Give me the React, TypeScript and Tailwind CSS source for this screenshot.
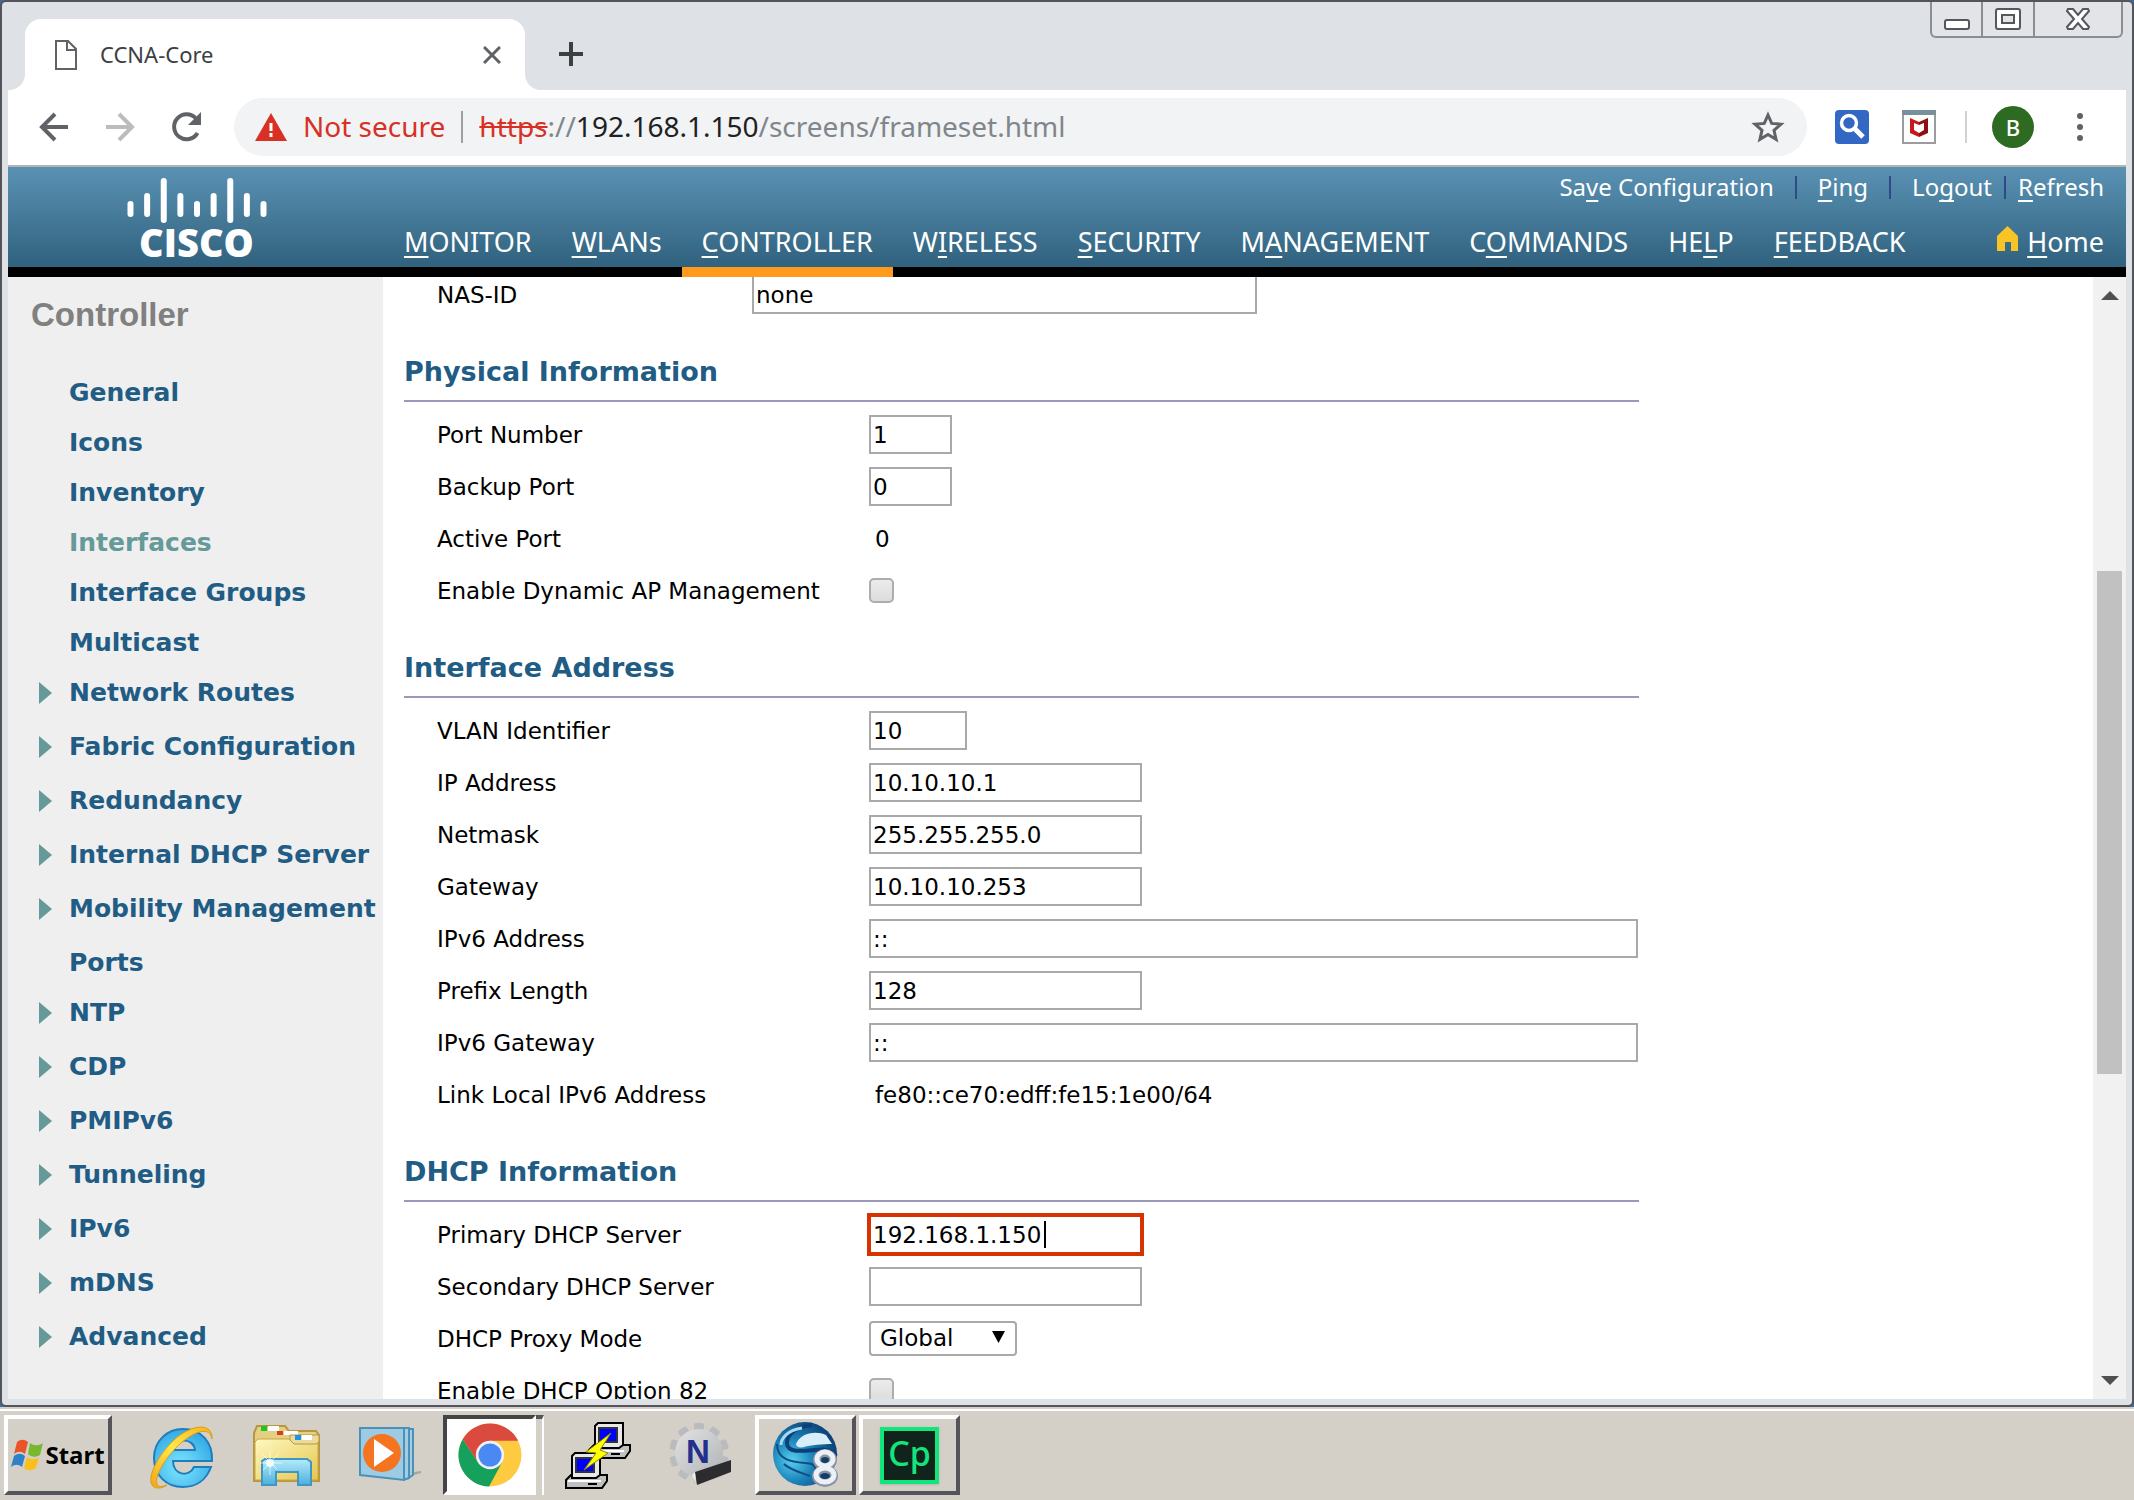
import React from "react";

type MenuEntry = { label: string; expandable?: boolean; current?: boolean };

const SIDE_MENU: MenuEntry[] = [
  { label: "General" },
  { label: "Icons" },
  { label: "Inventory" },
  { label: "Interfaces", current: true },
  { label: "Interface Groups" },
  { label: "Multicast" },
  { label: "Network Routes", expandable: true },
  { label: "Fabric Configuration", expandable: true },
  { label: "Redundancy", expandable: true },
  { label: "Internal DHCP Server", expandable: true },
  { label: "Mobility Management", expandable: true },
  { label: "Ports" },
  { label: "NTP", expandable: true },
  { label: "CDP", expandable: true },
  { label: "PMIPv6", expandable: true },
  { label: "Tunneling", expandable: true },
  { label: "IPv6", expandable: true },
  { label: "mDNS", expandable: true },
  { label: "Advanced", expandable: true },
];

/* [before, access key, after] */
const TOP_NAV: [string, string, string][] = [
  ["", "M", "ONITOR"],
  ["", "W", "LANs"],
  ["", "C", "ONTROLLER"],
  ["W", "I", "RELESS"],
  ["", "S", "ECURITY"],
  ["M", "A", "NAGEMENT"],
  ["C", "O", "MMANDS"],
  ["HE", "L", "P"],
  ["", "F", "EEDBACK"],
];

function Mnemonic({ parts }: { parts: [string, string, string] }) {
  return (
    <>
      {parts[0]}
      <span className="underline decoration-2 underline-offset-4 [text-decoration-skip-ink:none]">{parts[1]}</span>
      {parts[2]}
    </>
  );
}

/* ---------- browser chrome ---------- */

function WindowButtons() {
  return (
    <div className="absolute right-[3px] top-0 flex h-9 rounded-b-md border-2 border-t-0 border-[#8b8d91] bg-[#e2e4e8]">
      <button aria-label="Minimize" className="flex w-[51px] items-center justify-center border-r-2 border-[#8b8d91]">
        <svg width="26" height="24" viewBox="0 0 26 24">
          <rect x="1" y="13" width="24" height="9" rx="2" fill="#fff" stroke="#55575b" strokeWidth="2" />
        </svg>
      </button>
      <button aria-label="Maximize" className="flex w-[52px] items-center justify-center border-r-2 border-[#8b8d91]">
        <svg width="26" height="24" viewBox="0 0 26 24">
          <rect x="1" y="2" width="24" height="20" rx="2" fill="#fff" stroke="#55575b" strokeWidth="2" />
          <rect x="7" y="8" width="12" height="8" fill="#e2e4e8" stroke="#55575b" strokeWidth="2" />
        </svg>
      </button>
      <button aria-label="Close window" className="flex w-[86px] items-center justify-center">
        <svg width="26" height="24" viewBox="0 0 26 24">
          <path
            d="M3 2h5l5 6 5-6h5l1 2-7 8 7 8-1 2h-5l-5-6-5 6H3l-1-2 7-8-7-8z"
            fill="#fff"
            stroke="#55575b"
            strokeWidth="2"
          />
        </svg>
      </button>
    </div>
  );
}

function TabStrip() {
  return (
    <div className="relative flex h-[88px] shrink-0 items-end bg-[#dee1e6] pl-[17px]">
      <div className="relative flex h-[71px] w-[500px] items-center rounded-t-2xl bg-white pl-[30px] pr-6">
        <svg className="absolute -left-4 bottom-0" width="16" height="16" viewBox="0 0 16 16">
          <path d="M16 0v16H0C9 16 16 9 16 0z" fill="#fff" />
        </svg>
        <svg className="absolute -right-4 bottom-0" width="16" height="16" viewBox="0 0 16 16">
          <path d="M0 0v16h16C7 16 0 9 0 0z" fill="#fff" />
        </svg>
        <svg width="22" height="30" viewBox="0 0 22 30" fill="none" stroke="#5f6368" strokeWidth="2">
          <path d="M1 1h12l8 8v20H1z" />
          <path d="M12 1v9h9" />
        </svg>
        <span className="ml-[23px] text-[22px] text-[#3c4043]">CCNA-Core</span>
        <button aria-label="Close tab" className="ml-auto">
          <svg width="18" height="18" viewBox="0 0 18 18" stroke="#5f6368" strokeWidth="3">
            <path d="M1 1l16 16M17 1L1 17" />
          </svg>
        </button>
      </div>
      <button aria-label="New tab" className="mb-[23px] ml-[33px]">
        <svg width="26" height="26" viewBox="0 0 26 26" stroke="#3c4043" strokeWidth="4">
          <path d="M13 1v24M1 13h24" />
        </svg>
      </button>
      <WindowButtons />
    </div>
  );
}

function Toolbar() {
  return (
    <div className="flex h-[77px] shrink-0 items-center border-b-2 border-[#b1b3b5] bg-white pb-px pl-[31px] pr-[43px]">
      <button aria-label="Back">
        <svg width="30" height="30" viewBox="0 0 30 30" fill="none" stroke="#5f6368" strokeWidth="4">
          <path d="M29 15H3M16 2L3 15l13 13" />
        </svg>
      </button>
      <button aria-label="Forward" className="ml-9">
        <svg width="30" height="30" viewBox="0 0 30 30" fill="none" stroke="#babcbe" strokeWidth="4">
          <path d="M1 15h26M14 2l13 13-13 13" />
        </svg>
      </button>
      <button aria-label="Reload" className="ml-9">
        <svg width="32" height="32" viewBox="0 0 32 32">
          <path d="M26.500 22A12.500 12.500 0 1 1 25 7.500" fill="none" stroke="#5f6368" strokeWidth="4" />
          <path d="M30 1v13H17z" fill="#5f6368" />
        </svg>
      </button>
      <div className="ml-[31px] flex h-[58px] flex-1 items-center rounded-full bg-[#f1f3f4] pl-[21px] pr-[22px] text-[28px]">
        <svg width="32" height="28" viewBox="0 0 32 28">
          <path d="M16 0l16 28H0z" fill="#d93025" />
          <path d="M16 10v8M16 20v4" stroke="#fff" strokeWidth="3" />
        </svg>
        <span className="ml-4 pb-[3px] text-[#d93025]">Not secure</span>
        <span className="mx-4 h-8 w-[2px] bg-[#9aa0a6]" />
        <span className="whitespace-nowrap pb-[3px] text-[#80868b]">
          <span className="text-[#d93025] line-through decoration-2">https</span>://
          <span className="text-[#202124]">192.168.1.150</span>/screens/frameset.html
        </span>
        <button aria-label="Bookmark this page" className="ml-auto">
          <svg width="34" height="34" viewBox="0 0 34 34" fill="none" stroke="#5f6368" strokeWidth="3">
            <path d="M17 5l3.700 8.400 9.300.8-7 6.100 2.100 9L17 24.500 8.900 29.300l2.100-9-7-6.100 9.300-.8z" />
          </svg>
        </button>
      </div>
      <button aria-label="Search extension" className="ml-[28px]">
        <svg width="34" height="34" viewBox="0 0 34 34">
          <rect width="34" height="34" rx="4" fill="#3367c4" />
          <circle cx="14" cy="13" r="7.500" fill="none" stroke="#fff" strokeWidth="3.500" />
          <path d="M19 18l9 9" stroke="#fff" strokeWidth="5" />
        </svg>
      </button>
      <button aria-label="Security extension" className="ml-[33px]">
        <svg width="34" height="34" viewBox="0 0 34 34">
          <rect x="1" y="1" width="32" height="32" fill="#fff" stroke="#9a9ca0" strokeWidth="2" />
          <path d="M0 0h34v5H0z" fill="#78909c" />
          <path d="M8 8l9 4v3l-5-2v7l5 3v4l-9-4z" fill="#c8171e" />
          <path d="M26 8l-9 4v3l5-2v7l-5 3v4l9-4z" fill="#8c1014" />
        </svg>
      </button>
      <span className="ml-[29px] h-8 w-[2px] bg-[#d0d2d5]" />
      <button className="ml-[25px] flex size-[42px] items-center justify-center rounded-full bg-[#2d6b22] text-[22px] font-medium text-white">
        B
      </button>
      <button aria-label="Menu" className="ml-[43px]">
        <svg width="6" height="30" viewBox="0 0 6 30" fill="#5f6368">
          <circle cx="3" cy="4" r="3" />
          <circle cx="3" cy="15" r="3" />
          <circle cx="3" cy="26" r="3" />
        </svg>
      </button>
    </div>
  );
}

/* ---------- controller page ---------- */

function CiscoLogo() {
  const bars = [
    [25, 38], [17, 38], [2, 44], [17, 38], [25, 38], [17, 38], [2, 44], [17, 38], [25, 38],
  ];
  return (
    <div className="flex w-[375px] shrink-0 flex-col items-center pl-[2px] pt-2">
      <svg width="142" height="48" viewBox="0 0 142 48" stroke="#fff" strokeWidth="6" strokeLinecap="round">
        {bars.map(([top, bottom], i) => (
          <path key={i} d={`M${4.5 + i * 16.625} ${top + 4}V${bottom + 1}`} />
        ))}
      </svg>
      <span className="font-['Open_Sans'] text-[38px] font-extrabold leading-[38px] text-white">CISCO</span>
    </div>
  );
}

function Separator({ className }: { className: string }) {
  return <span className={`h-[23px] w-[2px] bg-[#2f4a85] ${className}`} />;
}

function PageHeader() {
  return (
    <header className="flex h-[110px] shrink-0 bg-[linear-gradient(#5a91b3,#30627e_100px,#000_100px)] text-white">
      <CiscoLogo />
      <div className="flex min-w-0 flex-1 flex-col justify-between">
        <div className="flex items-center justify-end whitespace-nowrap pr-[22px] text-2xl leading-[40px]">
          <a href="#save"><Mnemonic parts={["Sa", "v", "e Configuration"]} /></a>
          <Separator className="mx-[21px]" />
          <a href="#ping"><Mnemonic parts={["", "P", "ing"]} /></a>
          <Separator className="mx-[21px]" />
          <a href="#logout"><Mnemonic parts={["Lo", "g", "out"]} /></a>
          <Separator className="mx-3" />
          <a href="#refresh"><Mnemonic parts={["", "R", "efresh"]} /></a>
        </div>
        <nav className="flex whitespace-nowrap pl-px pr-[22px] text-[27px] leading-[48px]">
          {TOP_NAV.map((parts) => (
            <a
              key={parts.join("")}
              href={`#${parts.join("").toLowerCase()}`}
              className={
                parts[2] === "ONTROLLER"
                  ? "border-b-[10px] border-[#ff9a1c] px-5 pb-px"
                  : "border-b-[10px] border-transparent px-5 pb-px"
              }
            >
              <Mnemonic parts={parts} />
            </a>
          ))}
          <a href="#home" className="ml-auto flex">
            <svg className="mr-[9px] mt-2" width="21" height="26" viewBox="0 0 21 26">
              <path d="M10.500 0L21 10v15h-7v-9H8v9H0V10z" fill="#f7c325" />
            </svg>
            <span><Mnemonic parts={["", "H", "ome"]} /></span>
          </a>
        </nav>
      </div>
    </header>
  );
}

function Sidebar() {
  return (
    <nav className="w-[375px] shrink-0 overflow-hidden bg-[#efefef] pt-[18px]">
      <h1 className="pl-[23px] font-['Liberation_Sans'] text-[33px] font-bold leading-[40px] text-[#808080]">Controller</h1>
      <ul className="mt-[33px] font-['DejaVu_Sans'] text-[25px] font-bold leading-[50px] text-[#215c84]">
        {SIDE_MENU.map((m) => (
          <li key={m.label} className={m.expandable ? "flex h-[54px] pl-[31px]" : "flex h-[50px] pl-[31px]"}>
            <span className="flex h-[50px] w-[30px] items-center">
              {m.expandable && (
                <svg width="13" height="22" viewBox="0 0 13 22">
                  <path d="M0 0l13 11L0 22z" fill="#669999" />
                </svg>
              )}
            </span>
            <a
              href={`#${m.label}`}
              aria-current={m.current ? "page" : undefined}
              className={m.current ? "whitespace-nowrap text-[#669999]" : "whitespace-nowrap"}
            >
              {m.label}
            </a>
          </li>
        ))}
      </ul>
    </nav>
  );
}

function Section({ title, children }: { title: string; children: React.ReactNode }) {
  return (
    <section>
      <h2 className="ml-[21px] flex h-[81px] max-w-[1235px] items-end border-b-2 border-[#9999bb] pb-[9px] text-[27px] font-bold leading-[38px] text-[#215c84]">
        {title}
      </h2>
      <div className="pt-[7px]">{children}</div>
    </section>
  );
}

function Row({ id, label, children }: { id?: string; label: string; children: React.ReactNode }) {
  return (
    <div className="flex h-[52px] items-center pl-[54px]">
      {id ? (
        <label htmlFor={id} className="w-[432px] shrink-0 whitespace-nowrap">{label}</label>
      ) : (
        <span className="w-[432px] shrink-0 whitespace-nowrap">{label}</span>
      )}
      {children}
    </div>
  );
}

const INPUT = "mb-[2px] h-[39px] border-2 border-[#a9a9a9] bg-white px-[2px] pt-[2px] outline-none";
const CHECKBOX =
  "mb-[2px] size-[25px] appearance-none rounded-[5px] border-2 border-[#adadad] bg-linear-to-b from-[#ececec] to-[#dcdcdc]";

function InterfaceForm() {
  return (
    <form className="min-w-0 flex-1 overflow-hidden bg-white font-['DejaVu_Sans'] text-[23px] leading-[30px] text-black">
      <div className="-mt-2 flex h-[52px] items-center pl-[54px]">
        <label htmlFor="nas" className="w-[315px] shrink-0">NAS-ID</label>
        <input id="nas" defaultValue="none" className={`${INPUT} w-[505px]`} />
      </div>
      <Section title="Physical Information">
        <Row id="port" label="Port Number">
          <input id="port" defaultValue="1" className={`${INPUT} w-[83px]`} />
        </Row>
        <Row id="backup" label="Backup Port">
          <input id="backup" defaultValue="0" className={`${INPUT} w-[83px]`} />
        </Row>
        <Row label="Active Port"><span className="pl-[6px]">0</span></Row>
        <Row id="dynap" label="Enable Dynamic AP Management">
          <input id="dynap" type="checkbox" className={CHECKBOX} />
        </Row>
      </Section>
      <Section title="Interface Address">
        <Row id="vlan" label="VLAN Identifier">
          <input id="vlan" defaultValue="10" className={`${INPUT} w-[98px]`} />
        </Row>
        <Row id="ip" label="IP Address">
          <input id="ip" defaultValue="10.10.10.1" className={`${INPUT} w-[273px]`} />
        </Row>
        <Row id="mask" label="Netmask">
          <input id="mask" defaultValue="255.255.255.0" className={`${INPUT} w-[273px]`} />
        </Row>
        <Row id="gw" label="Gateway">
          <input id="gw" defaultValue="10.10.10.253" className={`${INPUT} w-[273px]`} />
        </Row>
        <Row id="ip6" label="IPv6 Address">
          <input id="ip6" defaultValue="::" className={`${INPUT} w-[769px]`} />
        </Row>
        <Row id="prefix" label="Prefix Length">
          <input id="prefix" defaultValue="128" className={`${INPUT} w-[273px]`} />
        </Row>
        <Row id="gw6" label="IPv6 Gateway">
          <input id="gw6" defaultValue="::" className={`${INPUT} w-[769px]`} />
        </Row>
        <Row label="Link Local IPv6 Address"><span className="pl-[6px]">fe80::ce70:edff:fe15:1e00/64</span></Row>
      </Section>
      <Section title="DHCP Information">
        <Row id="dhcp1" label="Primary DHCP Server">
          <div className="relative mb-[2px] flex">
            <input
              id="dhcp1"
              defaultValue="192.168.1.150"
              className="h-[39px] w-[273px] border-2 border-[#d63300] bg-white px-[2px] pt-[2px] outline-2 outline-[#d63300]"
            />
            <span className="absolute left-[175px] top-[6px] h-[27px] w-[2px] bg-black" />
          </div>
        </Row>
        <Row id="dhcp2" label="Secondary DHCP Server">
          <input id="dhcp2" className={`${INPUT} w-[273px]`} />
        </Row>
        <Row id="proxy" label="DHCP Proxy Mode">
          <div className="relative mb-[2px] flex">
            <select id="proxy" className="h-[35px] w-[148px] appearance-none rounded-sm border-2 border-[#a9a9a9] bg-white pl-[9px] leading-[30px]">
              <option>Global</option>
            </select>
            <svg className="pointer-events-none absolute right-3 top-[10px]" width="13" height="12" viewBox="0 0 13 12">
              <path d="M0 0h13L6.500 12z" />
            </svg>
          </div>
        </Row>
        <Row id="opt82" label="Enable DHCP Option 82">
          <input id="opt82" type="checkbox" className={CHECKBOX} />
        </Row>
      </Section>
    </form>
  );
}

function Scrollbar() {
  return (
    <div className="flex w-[33px] shrink-0 flex-col items-center bg-[#f1f1f1]" aria-hidden="true">
      <svg className="mt-[14px]" width="18" height="9" viewBox="0 0 18 9"><path d="M9 0l9 9H0z" fill="#505050" /></svg>
      <div className="grow-[271]" />
      <div className="w-[25px] grow-[504] bg-[#c1c1c1]" />
      <div className="grow-[302]" />
      <svg className="mb-[14px]" width="18" height="9" viewBox="0 0 18 9"><path d="M9 9L0 0h18z" fill="#505050" /></svg>
    </div>
  );
}

/* ---------- taskbar ---------- */

function WindowsFlag() {
  return (
    <svg width="34" height="32" viewBox="0 0 34 32">
      <path d="M6 3c4-3 7-3 11 0l-3 12c-4-3-7-3-11 0z" fill="#e8532a" />
      <path d="M19 4c4 3 9 3 13 0l-3 12c-5 3-9 2-12-1z" fill="#77b82f" />
      <path d="M3 17c4-3 7-3 11 0l-3 11c-4-3-7-3-11 0z" fill="#2f7fc9" />
      <path d="M16 18c4 3 8 3 12 0l-3 11c-4 3-9 3-12 0z" fill="#fbbf1c" />
    </svg>
  );
}

function ExplorerE() {
  return (
    <svg width="68" height="68" viewBox="0 0 68 68">
      <defs>
        <radialGradient id="ieBlue" cx=".45" cy=".65" r=".6">
          <stop offset="0" stopColor="#7fe6ff" />
          <stop offset="1" stopColor="#38aee6" />
        </radialGradient>
        <linearGradient id="ieGold" x1="0" y1="1" x2="1" y2="0">
          <stop offset="0" stopColor="#f2a51a" />
          <stop offset=".5" stopColor="#ffe94a" />
          <stop offset="1" stopColor="#f5b31c" />
        </linearGradient>
      </defs>
      <path
        d="M64 40H25c0 14 16 17 21 6h17C58 60 47 66 35 66 18 66 6 54 6 37 6 20 19 8 35 8c18 0 30 13 29 32zM25 29h22c-1-12-20-13-22 0z"
        fill="url(#ieBlue)"
        stroke="#1f7dbd"
        strokeWidth="2"
      />
      <path
        d="M64 18C65 2 45 2 26 19 8 36-3 60 6 66c4 2 9 1 13-2-5 2-9 2-10-1-3-8 10-29 24-41C47 10 62 5 64 18z"
        fill="url(#ieGold)"
        stroke="#dc9c15"
        strokeWidth="1"
      />
    </svg>
  );
}

function FolderIcon() {
  return (
    <svg width="68" height="64" viewBox="0 0 68 64">
      <defs>
        <linearGradient id="fold" x1="0" y1="0" x2="1" y2="1">
          <stop offset="0" stopColor="#fff8c0" />
          <stop offset="1" stopColor="#e5c64e" />
        </linearGradient>
        <linearGradient id="stand" x1="0" y1="0" x2="0" y2="1">
          <stop offset="0" stopColor="#b5ecfb" />
          <stop offset="1" stopColor="#4daedd" />
        </linearGradient>
      </defs>
      <path d="M2 58V10l3-7h28l4 5h27l3 4v46z" fill="#e6cf83" stroke="#b89640" strokeWidth="2" />
      <path d="M9 3h6v5H9z" fill="#18c926" />
      <path d="M16 3h11v5H16z" fill="#fff" />
      <path d="M25 8h6v4h-6z" fill="#cf4325" />
      <path d="M32 8h14v4H32z" fill="#fff" />
      <path d="M3 57V19l3-3h31l4 4h25v37z" fill="url(#fold)" stroke="#c6a548" strokeWidth="1" />
      <path d="M38 12h29v7l-3 2H42l-4-4z" fill="#eadb9a" stroke="#b89640" strokeWidth="1" />
      <path d="M43 12h6v5h-6z" fill="#1b94ea" />
      <path d="M50 12h10v5H50z" fill="#fff" />
      <path d="M10 62V38l3-2h42l4 3v23H46V49H24v13z" fill="url(#stand)" stroke="#3f97c4" strokeWidth="2" />
      <path d="M18 28v24M8 40h22M11 32l14 14M27 30L11 47" stroke="#fff" strokeWidth="1" opacity=".7" />
      <circle cx="18" cy="40" r="4" fill="#fff" opacity=".8" />
    </svg>
  );
}

function MediaIcon() {
  return (
    <svg width="62" height="58" viewBox="0 0 62 58">
      <path d="M14 3h40v46l-6 4" fill="#a5cde2" stroke="#4c92b8" strokeWidth="2" />
      <path d="M8 2h42v50l-6 2" fill="#a5cde2" stroke="#4c92b8" strokeWidth="2" />
      <path d="M1 2h44v52L1 49z" fill="#9dcbe4" stroke="#4c92b8" strokeWidth="2" />
      <path d="M55 46l7-1v2l-7 2z" fill="#aaa69d" />
      <circle cx="23" cy="27" r="19" fill="#f47420" />
      <path d="M15 13v28l20-14z" fill="#fff" />
    </svg>
  );
}

function ChromeIcon() {
  return (
    <svg width="64" height="64" viewBox="0 0 64 64">
      <circle cx="32" cy="32" r="31.500" fill="#fdca40" />
      <path d="M4.700 16.200A31.500 31.500 0 0 1 59.300 16.200L60 17.800H32L19.700 39z" fill="#db4a3f" />
      <path d="M4.700 16.200L19.700 39.100 44.300 39.100 31 63.500A31.500 31.500 0 0 1 4.700 16.200z" fill="#15a05c" />
      <circle cx="32" cy="32" r="14.200" fill="#f1f1f1" />
      <circle cx="32" cy="32" r="11.500" fill="#4a88f4" />
    </svg>
  );
}

function Monitor({ x, y }: { x: number; y: number }) {
  return (
    <g transform={`translate(${x} ${y})`} strokeWidth="2" stroke="#000">
      <path d="M1 28l5-5h36v6l-5 7H1z" fill="#c0c0c0" />
      <path d="M7 4l3-3h25v22l-4 3H7z" fill="#e8e8e8" />
      <path d="M11 6h18v14H11z" fill="#00f" stroke="#333" />
      <path d="M3 29h33" stroke="#fff" />
      <path d="M23 32h9" />
    </g>
  );
}

function PuttyIcon() {
  return (
    <svg width="68" height="67" viewBox="0 0 68 67">
      <Monitor x={24} y={0} />
      <Monitor x={1} y={30} />
      <path d="M47 11L22 30l10 1-12 17 24-17-8-3z" fill="#ff0" stroke="#8a8500" strokeWidth="1" />
    </svg>
  );
}

function GearNIcon() {
  return (
    <svg width="64" height="64" viewBox="0 0 64 64">
      <defs>
        <linearGradient id="gear" x1="0" y1="0" x2="1" y2="1">
          <stop offset="0" stopColor="#e3e3e5" />
          <stop offset="1" stopColor="#b0b2b5" />
        </linearGradient>
      </defs>
      {[0, 36, 72, 108, 144, 180, 216, 252, 288, 324].map((a) => (
        <rect key={a} x="24" y="0" width="10" height="12" rx="2" fill="#babbbf" transform={`rotate(${a} 29 30)`} />
      ))}
      <circle cx="29" cy="30" r="24" fill="url(#gear)" />
      <text x="16" y="40" className="font-['Liberation_Sans'] text-[33px] font-bold" fill="#232f8c">N</text>
      <path d="M25 49l36-12v12L27 62z" fill="#2c2c2e" />
      <path d="M25 49l-3 3 4 8z" fill="#eee" />
    </svg>
  );
}

function GlobeIcon() {
  return (
    <svg width="68" height="66" viewBox="0 0 68 66">
      <defs>
        <radialGradient id="orb" cx=".3" cy=".6" r=".75">
          <stop offset="0" stopColor="#56d0ee" />
          <stop offset=".45" stopColor="#1a82b8" />
          <stop offset="1" stopColor="#0b3a70" />
        </radialGradient>
      </defs>
      <circle cx="33" cy="32" r="32" fill="url(#orb)" />
      <path d="M24 22c4-11 20-14 30-9l6 9c-8 0-22 1-28 3-4 1-8 0-8-3z" fill="#d9eef8" />
      <path d="M40 3C26 4 14 12 15 22c1 9 16 7 27 6 10-1 18-1 22 6" fill="none" stroke="#0d3f78" strokeWidth="4" />
      <path d="M5 22c0 16 15 18 28 19 7 0 12 3 10 8M12 42c6 6 16 8 26 12" fill="none" stroke="#104b86" strokeWidth="2" />
      <path d="M30 6C16 8 9 16 9 23" fill="none" stroke="#a9d9ee" strokeWidth="3" />
      <g fill="#123f68" stroke="#8795a6" strokeWidth="8">
        <ellipse cx="53" cy="38" rx="8" ry="7" />
        <ellipse cx="53" cy="54" rx="9" ry="7" />
      </g>
      <g fill="none" stroke="#edf1f6" strokeWidth="5">
        <ellipse cx="53" cy="37" rx="8" ry="7" />
        <ellipse cx="53" cy="53" rx="9" ry="7" />
      </g>
    </svg>
  );
}

function CaptivateIcon() {
  return (
    <span className="flex h-[57px] w-[59px] items-center justify-center border-4 border-[#13e57d] bg-[#10241b] pb-1 text-[34px] font-medium leading-none text-[#13e57d] shadow">
      Cp
    </span>
  );
}

const RAISED =
  "flex h-[80px] items-center justify-center border-4 border-l-white border-t-white border-b-[#55545a] border-r-[#55545a]";

function Taskbar() {
  const slot = "flex h-[80px] w-[101px] items-center justify-center";
  return (
    <footer className="shrink-0 bg-[#d4d0c8] pt-[2px]">
      <div className="flex gap-[3px] border-t-2 border-white pb-[5px] pl-1 pt-1">
        <button className={`${RAISED} mr-[16px] w-[108px] text-2xl font-bold text-black`}>
          <WindowsFlag />
          Start
        </button>
        <button aria-label="Internet Explorer" className={slot}><ExplorerE /></button>
        <button aria-label="File Explorer" className={slot}><FolderIcon /></button>
        <button aria-label="Media Player" className={slot}><MediaIcon /></button>
        <span className="flex w-[101px]">
          <button
            aria-label="Chrome"
            className="flex h-[80px] flex-1 items-center justify-center border-4 border-b-white border-l-[#444] border-r-white border-t-[#444] bg-white"
          >
            <ChromeIcon />
          </button>
          <span className="h-[80px] w-2 border-r-2 border-t-4 border-r-white border-t-[#555] bg-[#d4d0c8]" />
        </span>
        <button aria-label="PuTTY" className={slot}><PuttyIcon /></button>
        <button aria-label="N settings" className={slot}><GearNIcon /></button>
        <button aria-label="Globe 8" className={`${RAISED} w-[101px]`}><GlobeIcon /></button>
        <button aria-label="Captivate" className={`${RAISED} w-[101px]`}><CaptivateIcon /></button>
      </div>
    </footer>
  );
}

export default function App() {
  return (
    <div className="flex h-screen flex-col overflow-hidden bg-[#3a6ea5] font-['Noto_Sans']">
      <div className="flex min-h-0 flex-1 flex-col overflow-hidden rounded-md border-2 border-[#55545a] bg-[#dee1e6] px-[6px] pb-[6px]">
        <TabStrip />
        <Toolbar />
        <PageHeader />
        <main className="flex min-h-0 flex-1 overflow-hidden">
          <Sidebar />
          <InterfaceForm />
          <Scrollbar />
        </main>
      </div>
      <Taskbar />
    </div>
  );
}
